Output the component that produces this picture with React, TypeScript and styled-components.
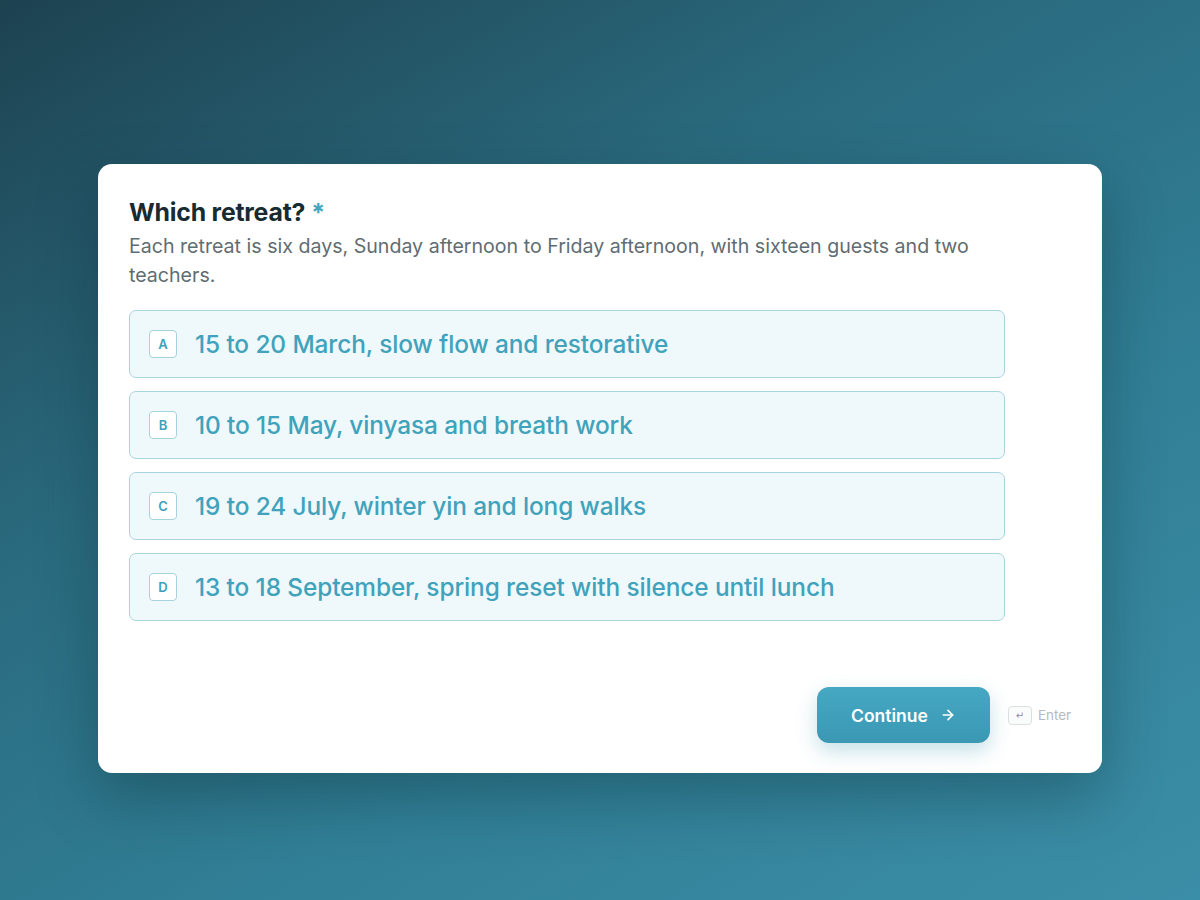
import React from 'react';
import styled, { createGlobalStyle } from 'styled-components';

const GlobalStyle = createGlobalStyle`
  * { box-sizing: border-box; }
  html, body { margin: 0; padding: 0; }
  body {
    font-family: Inter, "Noto Sans", "Liberation Sans", sans-serif;
    -webkit-font-smoothing: antialiased;
  }
`;

const Page = styled.div`
  width: 1200px;
  height: 900px;
  display: flex;
  align-items: center;
  justify-content: center;
  padding-top: 37px;
  background: linear-gradient(150deg, #1d4250 0%, #2a6a7e 35%, #317f96 65%, #3b8ea7 100%);
`;

const Card = styled.section`
  width: 1004px;
  background: #ffffff;
  border-radius: 14px;
  padding: 32px 31px 30px;
  box-shadow: 0 24px 60px rgba(10, 40, 50, 0.35);
`;

const Question = styled.div`
  max-width: 876px;
`;

const Title = styled.h1`
  margin: 0;
  font-size: 24.8px;
  line-height: 32px;
  font-weight: 700;
  color: #172b31;
  letter-spacing: -0.2px;
  > span {
    color: #45a5be;
    margin-left: 6px;
  }
`;

const Description = styled.p`
  margin: 4px 0 0;
  font-size: 19.6px;
  line-height: 29px;
  color: #5f6d72;
`;

const Options = styled.ul`
  list-style: none;
  margin: 20px 0 0;
  padding: 0;
  display: flex;
  flex-direction: column;
  gap: 13px;
`;

const Option = styled.li`
  height: 68px;
  display: flex;
  align-items: center;
  gap: 18px;
  padding: 0 19px;
  background: #eff8fb;
  border: 1px solid #a9d5e1;
  border-radius: 7px;
  cursor: pointer;
`;

const Key = styled.span`
  width: 28px;
  height: 28px;
  flex: none;
  display: flex;
  align-items: center;
  justify-content: center;
  background: #ffffff;
  border: 1.5px solid #a5d3df;
  border-radius: 4px;
  font-size: 13px;
  font-weight: 600;
  color: #3f9fb8;
`;

const Label = styled.span`
  font-size: 24.4px;
  font-weight: 500;
  color: #40a2bb;
  letter-spacing: -0.1px;
`;

const Footer = styled.div`
  margin-top: 66px;
  display: flex;
  align-items: center;
  justify-content: flex-end;
  gap: 18px;
`;

const ContinueButton = styled.button`
  width: 173px;
  height: 56px;
  display: flex;
  align-items: center;
  justify-content: center;
  gap: 12px;
  border: none;
  border-radius: 12px;
  background: linear-gradient(180deg, #46a8c3 0%, #3a98b3 100%);
  color: #ffffff;
  font-family: inherit;
  font-size: 17.5px;
  font-weight: 600;
  box-shadow: 0 8px 20px rgba(58, 152, 179, 0.3);
  cursor: pointer;
`;

const Hint = styled.div`
  display: flex;
  align-items: center;
  gap: 6px;
  font-size: 13.4px;
  color: #b4babd;
`;

const Kbd = styled.kbd`
  width: 24px;
  height: 19px;
  display: flex;
  align-items: center;
  justify-content: center;
  border: 1px solid #dcdfe1;
  border-radius: 4px;
  background: #fafbfb;
  font-family: "DejaVu Sans", sans-serif;
  font-size: 10px;
  color: #8a9296;
`;

const options = [
  { key: 'A', label: '15 to 20 March, slow flow and restorative' },
  { key: 'B', label: '10 to 15 May, vinyasa and breath work' },
  { key: 'C', label: '19 to 24 July, winter yin and long walks' },
  { key: 'D', label: '13 to 18 September, spring reset with silence until lunch' },
];

function ArrowRight() {
  return (
    <svg width="16" height="16" viewBox="0 0 24 24" fill="none" stroke="currentColor"
         strokeWidth="2.4" strokeLinecap="round" strokeLinejoin="round">
      <path d="M5 12h14"/>
      <path d="M12 5l7 7-7 7"/>
    </svg>
  );
}

export default function App() {
  return (
    <>
      <GlobalStyle/>
      <Page>
        <Card>
          <Question>
            <Title>Which retreat?<span>*</span></Title>
            <Description>
              Each retreat is six days, Sunday afternoon to Friday afternoon, with sixteen guests and two teachers.
            </Description>
            <Options>
              {options.map(o => (
                <Option key={o.key}>
                  <Key>{o.key}</Key>
                  <Label>{o.label}</Label>
                </Option>
              ))}
            </Options>
          </Question>
          <Footer>
            <ContinueButton>
              Continue
              <ArrowRight/>
            </ContinueButton>
            <Hint>
              <Kbd>↵</Kbd>
              Enter
            </Hint>
          </Footer>
        </Card>
      </Page>
    </>
  );
}
